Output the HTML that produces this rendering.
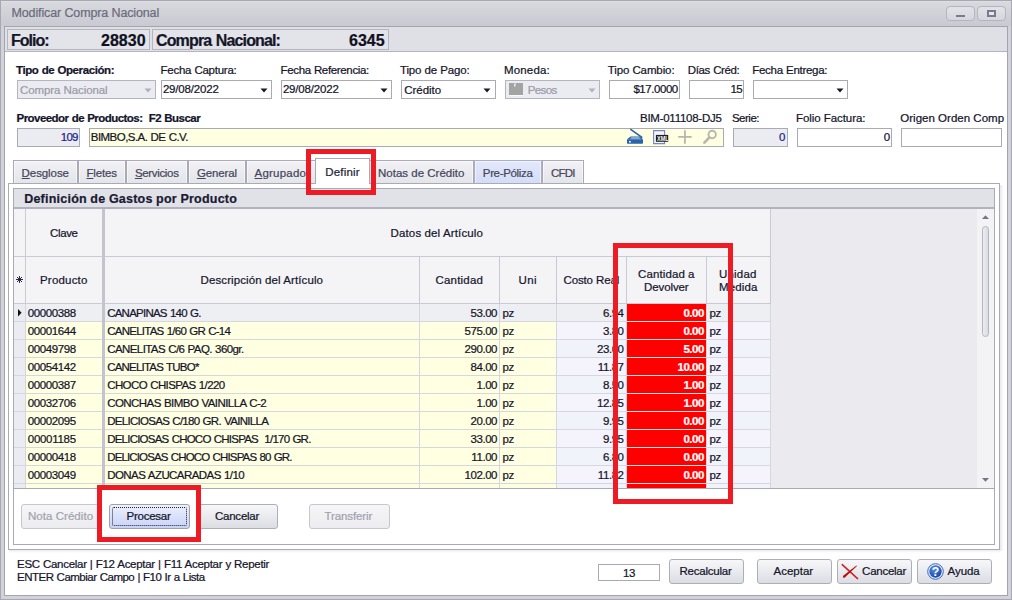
<!DOCTYPE html>
<html lang="es"><head><meta charset="utf-8"><title>Modificar Compra Nacional</title>
<style>
html,body{margin:0;padding:0;}
body{width:1012px;height:600px;overflow:hidden;position:relative;background:#d2d3da;font-family:"Liberation Sans", sans-serif;}
#w{position:absolute;left:0;top:0;width:1012px;height:600px;overflow:hidden;}
#w div,#w svg,#w .t{position:absolute;}
.t{white-space:nowrap;line-height:14px;height:14px;-webkit-text-stroke:0.22px currentColor;}
</style></head><body><div id="w">
<div style="left:0px;top:0px;width:1012px;height:600px;background:#d2d3da;box-shadow:inset 0 0 0 1px #a7a8b2;"></div>
<div style="left:1px;top:1px;width:1010px;height:25px;background:linear-gradient(#e4e5e9 0,#d8d9de 1px,#c9cad2 100%);"></div>
<div style="left:946px;top:6px;width:29px;height:15px;box-sizing:border-box;border:1px solid #b3b4bd;border-radius:4px;background:linear-gradient(#e2e3e8,#d6d7dd);"></div>
<div style="left:977px;top:6px;width:29px;height:15px;box-sizing:border-box;border:1px solid #b3b4bd;border-radius:4px;background:linear-gradient(#e2e3e8,#d6d7dd);"></div>
<div style="left:956px;top:15px;width:9px;height:2px;background:#7a7b88;"></div>
<div style="left:987px;top:10px;width:9px;height:7px;box-sizing:border-box;border:2px solid #7a7b88;background:#e8e9ee;"></div>
<div style="left:4px;top:26px;width:1004px;height:570px;box-sizing:border-box;border:1px solid #a3a4ae;background:#fff;"></div>
<div style="left:5px;top:27px;width:1002px;height:24px;background:#dfe0e5;"></div>
<div style="left:5px;top:51px;width:1002px;height:1px;background:#b4b5be;"></div>
<div style="left:7px;top:29px;width:143px;height:21px;box-sizing:border-box;border:1px solid #b4b5be;background:#e3e4e9;"></div>
<div style="left:152px;top:29px;width:237px;height:21px;box-sizing:border-box;border:1px solid #b4b5be;background:#e3e4e9;"></div>
<div style="left:17px;top:80px;width:139px;height:19px;box-sizing:border-box;border:1px solid #b4b5be;background:#ebecf1;"></div>
<svg style="left:143.5px;top:87.6px" width="8" height="5" viewBox="0 0 8 5"><path d="M0.5 0.5h7l-3.5 4z" fill="#b0b1bb"/></svg>
<div style="left:161px;top:80px;width:111px;height:19px;box-sizing:border-box;border:1px solid #a9aab5;background:#fff;"></div>
<svg style="left:259.5px;top:87.6px" width="8" height="5" viewBox="0 0 8 5"><path d="M0.5 0.5h7l-3.5 4z" fill="#1a1a2a"/></svg>
<div style="left:281px;top:80px;width:111px;height:19px;box-sizing:border-box;border:1px solid #a9aab5;background:#fff;"></div>
<svg style="left:379.5px;top:87.6px" width="8" height="5" viewBox="0 0 8 5"><path d="M0.5 0.5h7l-3.5 4z" fill="#1a1a2a"/></svg>
<div style="left:401px;top:80px;width:95px;height:19px;box-sizing:border-box;border:1px solid #a9aab5;background:#fff;"></div>
<svg style="left:483px;top:87.6px" width="8" height="5" viewBox="0 0 8 5"><path d="M0.5 0.5h7l-3.5 4z" fill="#1a1a2a"/></svg>
<div style="left:505px;top:80px;width:95px;height:19px;box-sizing:border-box;border:1px solid #b4b5be;background:#ebecf1;"></div>
<svg style="left:587.5px;top:87.6px" width="8" height="5" viewBox="0 0 8 5"><path d="M0.5 0.5h7l-3.5 4z" fill="#b0b1bb"/></svg>
<div style="left:509px;top:83px;width:14px;height:12px;background:#a3a3a3;"></div>
<div style="left:509px;top:95px;width:14px;height:1px;background:#fafafc;"></div>
<svg style="left:513px;top:83px" width="4" height="4" viewBox="0 0 4 4"><path d="M1.4 0.6 H3 L2.2 3.6 H1 Z" fill="#f4f4f6"/></svg>
<div style="left:609px;top:80px;width:71px;height:19px;box-sizing:border-box;border:1px solid #a9aab5;background:#fff;"></div>
<div style="left:689px;top:80px;width:55px;height:19px;box-sizing:border-box;border:1px solid #a9aab5;background:#fff;"></div>
<div style="left:753px;top:80px;width:95px;height:19px;box-sizing:border-box;border:1px solid #a9aab5;background:#fff;"></div>
<svg style="left:835.5px;top:87.6px" width="8" height="5" viewBox="0 0 8 5"><path d="M0.5 0.5h7l-3.5 4z" fill="#1a1a2a"/></svg>
<div style="left:17px;top:128px;width:63px;height:19px;box-sizing:border-box;border:1px solid #a9aab5;background:#ebecf1;"></div>
<div style="left:89px;top:128px;width:635px;height:19px;box-sizing:border-box;border:1px solid #a9aab5;background:#ffffe1;"></div>
<div style="left:733px;top:128px;width:55px;height:19px;box-sizing:border-box;border:1px solid #a9aab5;background:#ebecf1;"></div>
<div style="left:797px;top:128px;width:95px;height:19px;box-sizing:border-box;border:1px solid #a9aab5;background:#fff;"></div>
<div style="left:901px;top:128px;width:101px;height:19px;box-sizing:border-box;border:1px solid #a9aab5;background:#fff;"></div>
<svg style="left:626px;top:128px" width="18" height="17" viewBox="0 0 18 17"><path d="M4.3 1.2 L16.3 9.6" stroke="#2a62ad" stroke-width="1.6" fill="none"/><path d="M1 11.2 L4.6 8.4 H13.8 L17 11.2 Z" fill="#2a62ad"/><path d="M4.2 10.6 L5.4 9.4 H13.2 L14.6 10.6 Z" fill="#dbe8f7"/><path d="M1 11.2 H17 V15 Q17 15.8 16.2 15.8 H1.8 Q1 15.8 1 15 Z" fill="#2a62ad"/><rect x="3" y="13" width="1.8" height="1.5" fill="#fff"/></svg>
<svg style="left:653px;top:130px" width="16" height="15" viewBox="0 0 16 15"><path d="M0.6 0.6 H11.6 V13.6 H0.6 Z" fill="#f4f6fc" stroke="#7385c4" stroke-width="1.1"/><rect x="2.9" y="4.9" width="12.3" height="6.9" fill="#1d1d22"/></svg>
<div style="left:656px;top:134.6px;width:12.3px;height:7px;overflow:hidden;"><span style="position:absolute;left:0.9px;top:0.4px;font-size:7.6px;line-height:7px;font-weight:700;color:#fff;transform:scaleX(0.72);transform-origin:0 0;letter-spacing:0.1px;">XML</span></div>
<svg style="left:678px;top:130px" width="14" height="14" viewBox="0 0 14 14"><path d="M6.9 0.3V13.8M0.2 6.8H13.7" stroke="#b6b6b0" stroke-width="1.8"/></svg>
<svg style="left:702px;top:129px" width="16" height="16" viewBox="0 0 16 16"><circle cx="10.2" cy="5.5" r="3.7" fill="none" stroke="#b7b7ae" stroke-width="1.9"/><path d="M7.3 8.5 L2.4 13.7" stroke="#b7b7ae" stroke-width="2.6" stroke-linecap="round"/></svg>
<div style="left:8px;top:183px;width:992px;height:367px;box-sizing:border-box;border:1px solid #a9aab5;background:#fff;"></div>
<div style="left:13px;top:160px;width:65px;height:24px;box-sizing:border-box;border:1px solid #a9aab5;border-bottom:none;background:linear-gradient(#f2f2f5,#e3e4e9);box-shadow:inset 1px 1px 0 rgba(255,255,255,.55),inset -1px 0 0 rgba(255,255,255,.55);"></div>
<div style="left:78px;top:160px;width:48px;height:24px;box-sizing:border-box;border:1px solid #a9aab5;border-bottom:none;background:linear-gradient(#f2f2f5,#e3e4e9);box-shadow:inset 1px 1px 0 rgba(255,255,255,.55),inset -1px 0 0 rgba(255,255,255,.55);"></div>
<div style="left:126px;top:160px;width:62px;height:24px;box-sizing:border-box;border:1px solid #a9aab5;border-bottom:none;background:linear-gradient(#f2f2f5,#e3e4e9);box-shadow:inset 1px 1px 0 rgba(255,255,255,.55),inset -1px 0 0 rgba(255,255,255,.55);"></div>
<div style="left:188px;top:160px;width:58px;height:24px;box-sizing:border-box;border:1px solid #a9aab5;border-bottom:none;background:linear-gradient(#f2f2f5,#e3e4e9);box-shadow:inset 1px 1px 0 rgba(255,255,255,.55),inset -1px 0 0 rgba(255,255,255,.55);"></div>
<div style="left:246px;top:160px;width:71px;height:24px;box-sizing:border-box;border:1px solid #a9aab5;border-bottom:none;background:linear-gradient(#f2f2f5,#e3e4e9);box-shadow:inset 1px 1px 0 rgba(255,255,255,.55),inset -1px 0 0 rgba(255,255,255,.55);"></div>
<div style="left:368px;top:160px;width:106px;height:24px;box-sizing:border-box;border:1px solid #a9aab5;border-bottom:none;background:linear-gradient(#f2f2f5,#e3e4e9);box-shadow:inset 1px 1px 0 rgba(255,255,255,.55),inset -1px 0 0 rgba(255,255,255,.55);"></div>
<div style="left:474px;top:160px;width:68px;height:24px;box-sizing:border-box;border:1px solid #a9b0cf;border-bottom:none;background:linear-gradient(#e3e9fb,#d3dcf7);box-shadow:inset 1px 1px 0 rgba(255,255,255,.55),inset -1px 0 0 rgba(255,255,255,.55);"></div>
<div style="left:542px;top:160px;width:42px;height:24px;box-sizing:border-box;border:1px solid #a9aab5;border-bottom:none;background:linear-gradient(#f2f2f5,#e3e4e9);box-shadow:inset 1px 1px 0 rgba(255,255,255,.55),inset -1px 0 0 rgba(255,255,255,.55);"></div>
<div style="left:8px;top:183px;width:992px;height:1px;background:#a9aab5;"></div>
<div style="left:315px;top:158px;width:55px;height:26px;box-sizing:border-box;border:1px solid #a9aab5;border-bottom:none;background:#fff;"></div>
<div style="left:1000px;top:185px;width:4px;height:366px;background:linear-gradient(90deg,#e9e9ed,#fff);"></div>
<div style="left:9px;top:550px;width:991px;height:3px;background:linear-gradient(#ececf0,#fff);"></div>
<div style="left:13px;top:188px;width:982px;height:357px;box-sizing:border-box;border:1px solid #a9aab5;background:#fff;"></div>
<div style="left:14px;top:189px;width:980px;height:18px;background:#e1e2e7;"></div>
<div style="left:14px;top:207px;width:980px;height:2px;background:#b1b2bc;"></div>
<div style="left:14px;top:209px;width:757px;height:95px;background:#f4f4f7;"></div>
<div style="left:771px;top:209px;width:206px;height:279px;background:#ebebef;"></div>
<div style="left:977px;top:209px;width:17px;height:279px;background:#f3f3f6;"></div>
<div style="left:982px;top:226px;width:7px;height:111px;box-sizing:border-box;border:1px solid #b4b5bf;border-radius:4px;background:linear-gradient(90deg,#ecedf1,#dadbe1);"></div>
<svg style="left:982px;top:215px" width="7" height="4" viewBox="0 0 7 4"><path d="M0 4 L3.5 0.2 L7 4z" fill="#747584"/></svg>
<svg style="left:982px;top:478px" width="7" height="4" viewBox="0 0 7 4"><path d="M0 0 L3.5 3.8 L7 0z" fill="#747584"/></svg>
<div style="left:14px;top:256px;width:757px;height:1px;background:#c9cad3;"></div>
<div style="left:14px;top:303px;width:757px;height:1px;background:#c9cad3;"></div>
<div style="left:770px;top:209px;width:1px;height:95px;background:#c9cad3;"></div>
<div style="left:25px;top:209px;width:1px;height:95px;background:#c9cad3;"></div>
<div style="left:102px;top:209px;width:3px;height:95px;background:#c3c4ce;"></div>
<div style="left:419px;top:257px;width:1px;height:47px;background:#c9cad3;"></div>
<div style="left:499px;top:257px;width:1px;height:47px;background:#c9cad3;"></div>
<div style="left:556px;top:257px;width:1px;height:47px;background:#c9cad3;"></div>
<div style="left:626px;top:257px;width:1px;height:47px;background:#c9cad3;"></div>
<div style="left:706px;top:257px;width:1px;height:47px;background:#c9cad3;"></div>
<svg style="left:16px;top:276px" width="7" height="7" viewBox="0 0 7 7"><path d="M3.5 0V7M0 3.5H7M1 1L6 6M6 1L1 6" stroke="#15152a" stroke-width="0.9" fill="none"/></svg>
<div style="left:14px;top:304px;width:11px;height:17px;background:#ebecf1;"></div>
<div style="left:26px;top:304px;width:76px;height:17px;background:#eeeff3;"></div>
<div style="left:105px;top:304px;width:314px;height:17px;background:#eeeff3;"></div>
<div style="left:420px;top:304px;width:79px;height:17px;background:#eeeff3;"></div>
<div style="left:500px;top:304px;width:56px;height:17px;background:#eeeff3;"></div>
<div style="left:557px;top:304px;width:69px;height:17px;background:#eeeff3;"></div>
<div style="left:627px;top:304px;width:79px;height:17px;background:#ff0000;"></div>
<div style="left:707px;top:304px;width:63px;height:17px;background:#eeeff3;"></div>
<div style="left:14px;top:321px;width:757px;height:1px;background:#d6d7de;"></div>
<div style="left:627px;top:321px;width:79px;height:1px;background:#fbe6e6;"></div>
<div style="left:14px;top:322px;width:11px;height:17px;background:#ebecf1;"></div>
<div style="left:26px;top:322px;width:76px;height:17px;background:#ffffe1;"></div>
<div style="left:105px;top:322px;width:314px;height:17px;background:#ffffe1;"></div>
<div style="left:420px;top:322px;width:79px;height:17px;background:#ffffe1;"></div>
<div style="left:500px;top:322px;width:56px;height:17px;background:#ffffe1;"></div>
<div style="left:557px;top:322px;width:69px;height:17px;background:#f5f3fc;"></div>
<div style="left:627px;top:322px;width:79px;height:17px;background:#ff0000;"></div>
<div style="left:707px;top:322px;width:63px;height:17px;background:#f5f3fc;"></div>
<div style="left:14px;top:339px;width:757px;height:1px;background:#d6d7de;"></div>
<div style="left:627px;top:339px;width:79px;height:1px;background:#fbe6e6;"></div>
<div style="left:14px;top:340px;width:11px;height:17px;background:#ebecf1;"></div>
<div style="left:26px;top:340px;width:76px;height:17px;background:#ffffe1;"></div>
<div style="left:105px;top:340px;width:314px;height:17px;background:#ffffe1;"></div>
<div style="left:420px;top:340px;width:79px;height:17px;background:#ffffe1;"></div>
<div style="left:500px;top:340px;width:56px;height:17px;background:#ffffe1;"></div>
<div style="left:557px;top:340px;width:69px;height:17px;background:#f0f3f9;"></div>
<div style="left:627px;top:340px;width:79px;height:17px;background:#ff0000;"></div>
<div style="left:707px;top:340px;width:63px;height:17px;background:#f0f3f9;"></div>
<div style="left:14px;top:357px;width:757px;height:1px;background:#d6d7de;"></div>
<div style="left:627px;top:357px;width:79px;height:1px;background:#fbe6e6;"></div>
<div style="left:14px;top:358px;width:11px;height:17px;background:#ebecf1;"></div>
<div style="left:26px;top:358px;width:76px;height:17px;background:#ffffe1;"></div>
<div style="left:105px;top:358px;width:314px;height:17px;background:#ffffe1;"></div>
<div style="left:420px;top:358px;width:79px;height:17px;background:#ffffe1;"></div>
<div style="left:500px;top:358px;width:56px;height:17px;background:#ffffe1;"></div>
<div style="left:557px;top:358px;width:69px;height:17px;background:#f5f3fc;"></div>
<div style="left:627px;top:358px;width:79px;height:17px;background:#ff0000;"></div>
<div style="left:707px;top:358px;width:63px;height:17px;background:#f5f3fc;"></div>
<div style="left:14px;top:375px;width:757px;height:1px;background:#d6d7de;"></div>
<div style="left:627px;top:375px;width:79px;height:1px;background:#fbe6e6;"></div>
<div style="left:14px;top:376px;width:11px;height:17px;background:#ebecf1;"></div>
<div style="left:26px;top:376px;width:76px;height:17px;background:#ffffe1;"></div>
<div style="left:105px;top:376px;width:314px;height:17px;background:#ffffe1;"></div>
<div style="left:420px;top:376px;width:79px;height:17px;background:#ffffe1;"></div>
<div style="left:500px;top:376px;width:56px;height:17px;background:#ffffe1;"></div>
<div style="left:557px;top:376px;width:69px;height:17px;background:#f0f3f9;"></div>
<div style="left:627px;top:376px;width:79px;height:17px;background:#ff0000;"></div>
<div style="left:707px;top:376px;width:63px;height:17px;background:#f0f3f9;"></div>
<div style="left:14px;top:393px;width:757px;height:1px;background:#d6d7de;"></div>
<div style="left:627px;top:393px;width:79px;height:1px;background:#fbe6e6;"></div>
<div style="left:14px;top:394px;width:11px;height:17px;background:#ebecf1;"></div>
<div style="left:26px;top:394px;width:76px;height:17px;background:#ffffe1;"></div>
<div style="left:105px;top:394px;width:314px;height:17px;background:#ffffe1;"></div>
<div style="left:420px;top:394px;width:79px;height:17px;background:#ffffe1;"></div>
<div style="left:500px;top:394px;width:56px;height:17px;background:#ffffe1;"></div>
<div style="left:557px;top:394px;width:69px;height:17px;background:#f5f3fc;"></div>
<div style="left:627px;top:394px;width:79px;height:17px;background:#ff0000;"></div>
<div style="left:707px;top:394px;width:63px;height:17px;background:#f5f3fc;"></div>
<div style="left:14px;top:411px;width:757px;height:1px;background:#d6d7de;"></div>
<div style="left:627px;top:411px;width:79px;height:1px;background:#fbe6e6;"></div>
<div style="left:14px;top:412px;width:11px;height:17px;background:#ebecf1;"></div>
<div style="left:26px;top:412px;width:76px;height:17px;background:#ffffe1;"></div>
<div style="left:105px;top:412px;width:314px;height:17px;background:#ffffe1;"></div>
<div style="left:420px;top:412px;width:79px;height:17px;background:#ffffe1;"></div>
<div style="left:500px;top:412px;width:56px;height:17px;background:#ffffe1;"></div>
<div style="left:557px;top:412px;width:69px;height:17px;background:#f0f3f9;"></div>
<div style="left:627px;top:412px;width:79px;height:17px;background:#ff0000;"></div>
<div style="left:707px;top:412px;width:63px;height:17px;background:#f0f3f9;"></div>
<div style="left:14px;top:429px;width:757px;height:1px;background:#d6d7de;"></div>
<div style="left:627px;top:429px;width:79px;height:1px;background:#fbe6e6;"></div>
<div style="left:14px;top:430px;width:11px;height:17px;background:#ebecf1;"></div>
<div style="left:26px;top:430px;width:76px;height:17px;background:#ffffe1;"></div>
<div style="left:105px;top:430px;width:314px;height:17px;background:#ffffe1;"></div>
<div style="left:420px;top:430px;width:79px;height:17px;background:#ffffe1;"></div>
<div style="left:500px;top:430px;width:56px;height:17px;background:#ffffe1;"></div>
<div style="left:557px;top:430px;width:69px;height:17px;background:#f5f3fc;"></div>
<div style="left:627px;top:430px;width:79px;height:17px;background:#ff0000;"></div>
<div style="left:707px;top:430px;width:63px;height:17px;background:#f5f3fc;"></div>
<div style="left:14px;top:447px;width:757px;height:1px;background:#d6d7de;"></div>
<div style="left:627px;top:447px;width:79px;height:1px;background:#fbe6e6;"></div>
<div style="left:14px;top:448px;width:11px;height:17px;background:#ebecf1;"></div>
<div style="left:26px;top:448px;width:76px;height:17px;background:#ffffe1;"></div>
<div style="left:105px;top:448px;width:314px;height:17px;background:#ffffe1;"></div>
<div style="left:420px;top:448px;width:79px;height:17px;background:#ffffe1;"></div>
<div style="left:500px;top:448px;width:56px;height:17px;background:#ffffe1;"></div>
<div style="left:557px;top:448px;width:69px;height:17px;background:#f0f3f9;"></div>
<div style="left:627px;top:448px;width:79px;height:17px;background:#ff0000;"></div>
<div style="left:707px;top:448px;width:63px;height:17px;background:#f0f3f9;"></div>
<div style="left:14px;top:465px;width:757px;height:1px;background:#d6d7de;"></div>
<div style="left:627px;top:465px;width:79px;height:1px;background:#fbe6e6;"></div>
<div style="left:14px;top:466px;width:11px;height:17px;background:#ebecf1;"></div>
<div style="left:26px;top:466px;width:76px;height:17px;background:#ffffe1;"></div>
<div style="left:105px;top:466px;width:314px;height:17px;background:#ffffe1;"></div>
<div style="left:420px;top:466px;width:79px;height:17px;background:#ffffe1;"></div>
<div style="left:500px;top:466px;width:56px;height:17px;background:#ffffe1;"></div>
<div style="left:557px;top:466px;width:69px;height:17px;background:#f5f3fc;"></div>
<div style="left:627px;top:466px;width:79px;height:17px;background:#ff0000;"></div>
<div style="left:707px;top:466px;width:63px;height:17px;background:#f5f3fc;"></div>
<div style="left:14px;top:483px;width:757px;height:1px;background:#d6d7de;"></div>
<div style="left:627px;top:483px;width:79px;height:1px;background:#fbe6e6;"></div>
<div style="left:14px;top:484px;width:11px;height:4px;background:#ebecf1;"></div>
<div style="left:26px;top:484px;width:76px;height:4px;background:#ffffe1;"></div>
<div style="left:105px;top:484px;width:314px;height:4px;background:#ffffe1;"></div>
<div style="left:420px;top:484px;width:79px;height:4px;background:#ffffe1;"></div>
<div style="left:500px;top:484px;width:56px;height:4px;background:#ffffe1;"></div>
<div style="left:557px;top:484px;width:69px;height:4px;background:#f0f3f9;"></div>
<div style="left:627px;top:484px;width:79px;height:4px;background:#ff0000;"></div>
<div style="left:707px;top:484px;width:63px;height:4px;background:#f0f3f9;"></div>
<div style="left:25px;top:304px;width:1px;height:184px;background:#d6d7de;"></div>
<div style="left:419px;top:304px;width:1px;height:184px;background:#d6d7de;"></div>
<div style="left:499px;top:304px;width:1px;height:184px;background:#d6d7de;"></div>
<div style="left:556px;top:304px;width:1px;height:184px;background:#d6d7de;"></div>
<div style="left:626px;top:304px;width:1px;height:184px;background:#d6d7de;"></div>
<div style="left:706px;top:304px;width:1px;height:184px;background:#d6d7de;"></div>
<div style="left:770px;top:304px;width:1px;height:184px;background:#d6d7de;"></div>
<div style="left:102px;top:304px;width:3px;height:184px;background:#c3c4ce;"></div>
<div style="left:14px;top:488px;width:980px;height:1px;background:#a9aab5;"></div>
<svg style="left:18px;top:309px" width="4" height="8" viewBox="0 0 4 8"><path d="M0 0 L3.6 3.7 L0 7.4z" fill="#111"/></svg>
<div style="left:21px;top:504px;width:81px;height:25px;box-sizing:border-box;border-radius:3px;border:1px solid #c6c7cf;background:linear-gradient(#f6f6f8,#ececf0);"></div>
<div style="left:109px;top:504px;width:81px;height:25px;box-sizing:border-box;border-radius:3px;border:1px solid #9fa0ac;background:linear-gradient(#eef1fd,#dbe2fa 45%,#c8d3f6);"></div>
<div style="left:112px;top:507px;width:75px;height:19px;box-sizing:border-box;border:1px dotted #222;border-radius:2px;"></div>
<div style="left:197px;top:504px;width:81px;height:25px;box-sizing:border-box;border-radius:3px;border:1px solid #adaeb8;background:linear-gradient(#f7f7f9,#ebecf0 45%,#dcdde3);"></div>
<div style="left:309px;top:504px;width:81px;height:25px;box-sizing:border-box;border-radius:3px;border:1px solid #c6c7cf;background:linear-gradient(#f6f6f8,#ececf0);"></div>
<div style="left:598px;top:564px;width:62px;height:17px;box-sizing:border-box;border:1px solid #a9aab5;background:#fff;"></div>
<div style="left:669px;top:559px;width:75px;height:25px;box-sizing:border-box;border-radius:3px;border:1px solid #adaeb8;background:linear-gradient(#f7f7f9,#ebecf0 45%,#dcdde3);"></div>
<div style="left:757px;top:559px;width:75px;height:25px;box-sizing:border-box;border-radius:3px;border:1px solid #adaeb8;background:linear-gradient(#f7f7f9,#ebecf0 45%,#dcdde3);"></div>
<div style="left:837px;top:559px;width:75px;height:25px;box-sizing:border-box;border-radius:3px;border:1px solid #adaeb8;background:linear-gradient(#f7f7f9,#ebecf0 45%,#dcdde3);"></div>
<div style="left:917px;top:559px;width:75px;height:25px;box-sizing:border-box;border-radius:3px;border:1px solid #adaeb8;background:linear-gradient(#f7f7f9,#ebecf0 45%,#dcdde3);"></div>
<svg style="left:841px;top:563px" width="18" height="17" viewBox="0 0 18 17"><path d="M1.2 1.6 L16.6 15.6" stroke="#d21f1f" stroke-width="1.5" stroke-linecap="round"/><path d="M15.4 2.4 L16 3 L3.6 14.8 L1.8 14.6 L2.2 12.8 Z" fill="#b80f0f"/></svg>
<svg style="left:927px;top:563px" width="17" height="17" viewBox="0 0 17 17"><defs><radialGradient id="hg" cx="0.4" cy="0.3" r="0.8"><stop offset="0" stop-color="#5a8fe6"/><stop offset="1" stop-color="#103c9f"/></radialGradient></defs><circle cx="8.5" cy="8.5" r="7.8" fill="#eef3fc" stroke="#3a63b8" stroke-width="1"/><circle cx="8.5" cy="8.5" r="6.2" fill="url(#hg)"/><text x="8.5" y="12.6" font-family="Liberation Sans, sans-serif" font-size="12.3" font-weight="700" fill="#fff" text-anchor="middle">?</text></svg>
<span class="t" style="left:11.50px;top:6.37px;font-size:12.5px;letter-spacing:-0.138px;color:#6b6b7c;word-spacing:0.138px;">Modificar Compra Nacional</span>
<span class="t" style="left:16.00px;top:63.40px;font-size:11.5px;letter-spacing:-0.405px;color:#14142a;font-weight:700;word-spacing:0.405px;">Tipo de Operación:</span>
<span class="t" style="left:160.50px;top:63.40px;font-size:11.5px;letter-spacing:-0.251px;color:#14142a;word-spacing:0.251px;">Fecha Captura:</span>
<span class="t" style="left:280.50px;top:63.40px;font-size:11.5px;letter-spacing:-0.348px;color:#14142a;word-spacing:0.348px;">Fecha Referencia:</span>
<span class="t" style="left:400.00px;top:63.40px;font-size:11.5px;letter-spacing:-0.153px;color:#14142a;word-spacing:0.153px;">Tipo de Pago:</span>
<span class="t" style="left:504.10px;top:63.40px;font-size:11.5px;letter-spacing:0.133px;color:#14142a;">Moneda:</span>
<span class="t" style="left:607.70px;top:63.40px;font-size:11.5px;letter-spacing:-0.106px;color:#14142a;word-spacing:0.106px;">Tipo Cambio:</span>
<span class="t" style="left:687.80px;top:63.40px;font-size:11.5px;letter-spacing:-0.374px;color:#14142a;word-spacing:0.374px;">Días Créd:</span>
<span class="t" style="left:752.20px;top:63.40px;font-size:11.5px;letter-spacing:-0.272px;color:#14142a;word-spacing:0.272px;">Fecha Entrega:</span>
<span class="t" style="left:20.00px;top:83.20px;font-size:11.5px;letter-spacing:-0.090px;color:#9a9aa6;word-spacing:0.090px;">Compra Nacional</span>
<span class="t" style="left:162.90px;top:82.20px;font-size:11.5px;letter-spacing:-0.176px;color:#14142a;">29/08/2022</span>
<span class="t" style="left:282.90px;top:82.20px;font-size:11.5px;letter-spacing:-0.176px;color:#14142a;">29/08/2022</span>
<span class="t" style="left:404.30px;top:83.40px;font-size:11.5px;letter-spacing:-0.040px;color:#14142a;">Crédito</span>
<span class="t" style="left:527.80px;top:83.40px;font-size:11.5px;letter-spacing:-0.654px;color:#9a9aa6;">Pesos</span>
<span class="t" style="left:633.40px;top:82.20px;font-size:11.5px;letter-spacing:-0.446px;color:#14142a;">$17.0000</span>
<span class="t" style="left:730.50px;top:82.20px;font-size:11.5px;letter-spacing:-0.648px;color:#14142a;">15</span>
<span class="t" style="left:16.50px;top:111.00px;font-size:11.5px;letter-spacing:-0.545px;color:#14142a;font-weight:700;word-spacing:0.545px;white-space:pre;">Proveedor de Productos:  F2 Buscar</span>
<span class="t" style="left:640.00px;top:111.00px;font-size:11.5px;letter-spacing:-0.260px;color:#14142a;">BIM-011108-DJ5</span>
<span class="t" style="left:731.90px;top:111.00px;font-size:11.5px;letter-spacing:-0.474px;color:#14142a;">Serie:</span>
<span class="t" style="left:796.00px;top:111.00px;font-size:11.5px;letter-spacing:-0.070px;color:#14142a;word-spacing:0.070px;">Folio Factura:</span>
<span class="t" style="left:900.30px;top:111.00px;font-size:11.5px;letter-spacing:0.017px;color:#14142a;word-spacing:-0.017px;">Origen Orden Comp</span>
<span class="t" style="left:60.80px;top:130.40px;font-size:11.5px;letter-spacing:-0.796px;color:#1c1c8c;">109</span>
<span class="t" style="left:90.80px;top:130.40px;font-size:11.5px;letter-spacing:-0.542px;color:#14142a;word-spacing:0.542px;">BIMBO,S.A. DE C.V.</span>
<span class="t" style="left:779.10px;top:130.40px;font-size:11.5px;letter-spacing:0.194px;color:#1c1c8c;">0</span>
<span class="t" style="left:883.80px;top:130.40px;font-size:11.5px;letter-spacing:-0.106px;color:#14142a;">0</span>
<span class="t" style="left:11.00px;top:34.11px;font-size:16px;letter-spacing:-0.991px;color:#16162a;font-weight:700;">Folio:</span>
<span class="t" style="left:101.00px;top:34.11px;font-size:16px;letter-spacing:0.020px;color:#101020;font-weight:700;">28830</span>
<span class="t" style="left:156.00px;top:34.11px;font-size:16px;letter-spacing:-0.855px;color:#16162a;font-weight:700;word-spacing:0.855px;">Compra Nacional:</span>
<span class="t" style="left:349.00px;top:34.11px;font-size:16px;letter-spacing:0.002px;color:#101020;font-weight:700;">6345</span>
<span class="t" style="left:21.60px;top:165.90px;font-size:11.5px;letter-spacing:-0.082px;color:#45455a;"><u>D</u>esglose</span>
<span class="t" style="left:86.50px;top:165.90px;font-size:11.5px;letter-spacing:-0.188px;color:#45455a;"><u>F</u>letes</span>
<span class="t" style="left:134.90px;top:165.90px;font-size:11.5px;letter-spacing:-0.328px;color:#45455a;"><u>S</u>ervicios</span>
<span class="t" style="left:196.90px;top:165.90px;font-size:11.5px;letter-spacing:-0.146px;color:#45455a;"><u>G</u>eneral</span>
<span class="t" style="left:254.50px;top:165.90px;font-size:11.5px;letter-spacing:0.216px;color:#45455a;"><u>A</u>grupado</span>
<span class="t" style="left:325.20px;top:164.90px;font-size:11.5px;letter-spacing:0.209px;color:#1e1e38;">Definir</span>
<span class="t" style="left:378.00px;top:165.90px;font-size:11.5px;letter-spacing:0.007px;color:#45455a;word-spacing:-0.007px;">Notas de Crédito</span>
<span class="t" style="left:482.80px;top:165.90px;font-size:11.5px;letter-spacing:-0.336px;color:#45455a;">Pre-Póliza</span>
<span class="t" style="left:551.10px;top:165.90px;font-size:11.5px;letter-spacing:-0.811px;color:#45455a;">CFDI</span>
<span class="t" style="left:24.20px;top:191.67px;font-size:12.5px;letter-spacing:0.228px;color:#1a1a34;font-weight:700;word-spacing:-0.228px;">Definición de Gastos por Producto</span>
<span class="t" style="left:50.00px;top:226.40px;font-size:11.5px;letter-spacing:-0.361px;color:#16162c;">Clave</span>
<span class="t" style="left:390.50px;top:226.40px;font-size:11.5px;letter-spacing:0.154px;color:#16162c;word-spacing:-0.154px;">Datos del Artículo</span>
<span class="t" style="left:40.00px;top:273.40px;font-size:11.5px;letter-spacing:0.196px;color:#16162c;">Producto</span>
<span class="t" style="left:200.50px;top:273.40px;font-size:11.5px;letter-spacing:0.110px;color:#16162c;word-spacing:-0.110px;">Descripción del Artículo</span>
<span class="t" style="left:435.50px;top:273.40px;font-size:11.5px;letter-spacing:0.194px;color:#16162c;">Cantidad</span>
<span class="t" style="left:518.50px;top:273.40px;font-size:11.5px;letter-spacing:0.445px;color:#16162c;">Uni</span>
<span class="t" style="left:563.50px;top:273.40px;font-size:11.5px;letter-spacing:-0.143px;color:#16162c;word-spacing:0.143px;">Costo Real</span>
<span class="t" style="left:638.00px;top:267.20px;font-size:11.5px;letter-spacing:0.108px;color:#16162c;word-spacing:-0.108px;">Cantidad a</span>
<span class="t" style="left:644.00px;top:280.20px;font-size:11.5px;letter-spacing:-0.099px;color:#16162c;">Devolver</span>
<span class="t" style="left:719.00px;top:267.20px;font-size:11.5px;letter-spacing:0.191px;color:#16162c;">Unidad</span>
<span class="t" style="left:719.00px;top:280.20px;font-size:11.5px;letter-spacing:0.147px;color:#16162c;">Medida</span>
<span class="t" style="left:27.80px;top:305.50px;font-size:11.5px;letter-spacing:-0.396px;color:#14142a;">00000388</span>
<span class="t" style="left:107.20px;top:305.50px;font-size:11.5px;letter-spacing:-0.771px;color:#14142a;word-spacing:0.771px;white-space:pre;">CANAPINAS 140 G.</span>
<span class="t" style="left:470.52px;top:305.50px;font-size:11.5px;letter-spacing:-0.450px;color:#14142a;">53.00</span>
<span class="t" style="left:502.50px;top:305.50px;font-size:11.5px;letter-spacing:-0.378px;color:#14142a;">pz</span>
<span class="t" style="left:602.96px;top:305.50px;font-size:11.5px;letter-spacing:-0.450px;color:#14142a;">6.94</span>
<span class="t" style="left:683.41px;top:305.50px;font-size:11.5px;letter-spacing:-0.500px;color:#ffffff;font-weight:700;">0.00</span>
<span class="t" style="left:709.50px;top:305.50px;font-size:11.5px;letter-spacing:-0.378px;color:#14142a;">pz</span>
<span class="t" style="left:27.80px;top:323.50px;font-size:11.5px;letter-spacing:-0.396px;color:#14142a;">00001644</span>
<span class="t" style="left:107.20px;top:323.50px;font-size:11.5px;letter-spacing:-0.753px;color:#14142a;word-spacing:0.753px;white-space:pre;">CANELITAS 1/60 GR C-14</span>
<span class="t" style="left:464.56px;top:323.50px;font-size:11.5px;letter-spacing:-0.450px;color:#14142a;">575.00</span>
<span class="t" style="left:502.50px;top:323.50px;font-size:11.5px;letter-spacing:-0.378px;color:#14142a;">pz</span>
<span class="t" style="left:602.96px;top:323.50px;font-size:11.5px;letter-spacing:-0.450px;color:#14142a;">3.80</span>
<span class="t" style="left:683.41px;top:323.50px;font-size:11.5px;letter-spacing:-0.500px;color:#ffffff;font-weight:700;">0.00</span>
<span class="t" style="left:709.50px;top:323.50px;font-size:11.5px;letter-spacing:-0.378px;color:#14142a;">pz</span>
<span class="t" style="left:27.80px;top:341.50px;font-size:11.5px;letter-spacing:-0.396px;color:#14142a;">00049798</span>
<span class="t" style="left:107.20px;top:341.50px;font-size:11.5px;letter-spacing:-0.579px;color:#14142a;word-spacing:0.579px;white-space:pre;">CANELITAS C/6 PAQ. 360gr.</span>
<span class="t" style="left:464.56px;top:341.50px;font-size:11.5px;letter-spacing:-0.450px;color:#14142a;">290.00</span>
<span class="t" style="left:502.50px;top:341.50px;font-size:11.5px;letter-spacing:-0.378px;color:#14142a;">pz</span>
<span class="t" style="left:597.02px;top:341.50px;font-size:11.5px;letter-spacing:-0.450px;color:#14142a;">23.60</span>
<span class="t" style="left:683.41px;top:341.50px;font-size:11.5px;letter-spacing:-0.500px;color:#ffffff;font-weight:700;">5.00</span>
<span class="t" style="left:709.50px;top:341.50px;font-size:11.5px;letter-spacing:-0.378px;color:#14142a;">pz</span>
<span class="t" style="left:27.80px;top:359.50px;font-size:11.5px;letter-spacing:-0.396px;color:#14142a;">00054142</span>
<span class="t" style="left:107.20px;top:359.50px;font-size:11.5px;letter-spacing:-0.791px;color:#14142a;word-spacing:0.791px;white-space:pre;">CANELITAS TUBO*</span>
<span class="t" style="left:470.52px;top:359.50px;font-size:11.5px;letter-spacing:-0.450px;color:#14142a;">84.00</span>
<span class="t" style="left:502.50px;top:359.50px;font-size:11.5px;letter-spacing:-0.378px;color:#14142a;">pz</span>
<span class="t" style="left:597.86px;top:359.50px;font-size:11.5px;letter-spacing:-0.450px;color:#14142a;">11.87</span>
<span class="t" style="left:677.52px;top:359.50px;font-size:11.5px;letter-spacing:-0.500px;color:#ffffff;font-weight:700;">10.00</span>
<span class="t" style="left:709.50px;top:359.50px;font-size:11.5px;letter-spacing:-0.378px;color:#14142a;">pz</span>
<span class="t" style="left:27.80px;top:377.50px;font-size:11.5px;letter-spacing:-0.396px;color:#14142a;">00000387</span>
<span class="t" style="left:107.20px;top:377.50px;font-size:11.5px;letter-spacing:-0.601px;color:#14142a;word-spacing:0.601px;white-space:pre;">CHOCO CHISPAS 1/220</span>
<span class="t" style="left:476.46px;top:377.50px;font-size:11.5px;letter-spacing:-0.450px;color:#14142a;">1.00</span>
<span class="t" style="left:502.50px;top:377.50px;font-size:11.5px;letter-spacing:-0.378px;color:#14142a;">pz</span>
<span class="t" style="left:602.96px;top:377.50px;font-size:11.5px;letter-spacing:-0.450px;color:#14142a;">8.50</span>
<span class="t" style="left:683.41px;top:377.50px;font-size:11.5px;letter-spacing:-0.500px;color:#ffffff;font-weight:700;">1.00</span>
<span class="t" style="left:709.50px;top:377.50px;font-size:11.5px;letter-spacing:-0.378px;color:#14142a;">pz</span>
<span class="t" style="left:27.80px;top:395.50px;font-size:11.5px;letter-spacing:-0.396px;color:#14142a;">00032706</span>
<span class="t" style="left:107.20px;top:395.50px;font-size:11.5px;letter-spacing:-0.557px;color:#14142a;word-spacing:0.557px;white-space:pre;">CONCHAS BIMBO VAINILLA C-2</span>
<span class="t" style="left:476.46px;top:395.50px;font-size:11.5px;letter-spacing:-0.450px;color:#14142a;">1.00</span>
<span class="t" style="left:502.50px;top:395.50px;font-size:11.5px;letter-spacing:-0.378px;color:#14142a;">pz</span>
<span class="t" style="left:597.02px;top:395.50px;font-size:11.5px;letter-spacing:-0.450px;color:#14142a;">12.85</span>
<span class="t" style="left:683.41px;top:395.50px;font-size:11.5px;letter-spacing:-0.500px;color:#ffffff;font-weight:700;">1.00</span>
<span class="t" style="left:709.50px;top:395.50px;font-size:11.5px;letter-spacing:-0.378px;color:#14142a;">pz</span>
<span class="t" style="left:27.80px;top:413.50px;font-size:11.5px;letter-spacing:-0.396px;color:#14142a;">00002095</span>
<span class="t" style="left:107.20px;top:413.50px;font-size:11.5px;letter-spacing:-0.711px;color:#14142a;word-spacing:0.711px;white-space:pre;">DELICIOSAS C/180 GR. VAINILLA</span>
<span class="t" style="left:470.52px;top:413.50px;font-size:11.5px;letter-spacing:-0.450px;color:#14142a;">20.00</span>
<span class="t" style="left:502.50px;top:413.50px;font-size:11.5px;letter-spacing:-0.378px;color:#14142a;">pz</span>
<span class="t" style="left:602.96px;top:413.50px;font-size:11.5px;letter-spacing:-0.450px;color:#14142a;">9.95</span>
<span class="t" style="left:683.41px;top:413.50px;font-size:11.5px;letter-spacing:-0.500px;color:#ffffff;font-weight:700;">0.00</span>
<span class="t" style="left:709.50px;top:413.50px;font-size:11.5px;letter-spacing:-0.378px;color:#14142a;">pz</span>
<span class="t" style="left:27.80px;top:431.50px;font-size:11.5px;letter-spacing:-0.289px;color:#14142a;">00001185</span>
<span class="t" style="left:107.20px;top:431.50px;font-size:11.5px;letter-spacing:-0.776px;color:#14142a;word-spacing:0.776px;white-space:pre;">DELICIOSAS CHOCO CHISPAS  1/170 GR.</span>
<span class="t" style="left:470.52px;top:431.50px;font-size:11.5px;letter-spacing:-0.450px;color:#14142a;">33.00</span>
<span class="t" style="left:502.50px;top:431.50px;font-size:11.5px;letter-spacing:-0.378px;color:#14142a;">pz</span>
<span class="t" style="left:602.96px;top:431.50px;font-size:11.5px;letter-spacing:-0.450px;color:#14142a;">9.95</span>
<span class="t" style="left:683.41px;top:431.50px;font-size:11.5px;letter-spacing:-0.500px;color:#ffffff;font-weight:700;">0.00</span>
<span class="t" style="left:709.50px;top:431.50px;font-size:11.5px;letter-spacing:-0.378px;color:#14142a;">pz</span>
<span class="t" style="left:27.80px;top:449.50px;font-size:11.5px;letter-spacing:-0.396px;color:#14142a;">00000418</span>
<span class="t" style="left:107.20px;top:449.50px;font-size:11.5px;letter-spacing:-0.855px;color:#14142a;word-spacing:0.855px;white-space:pre;">DELICIOSAS CHOCO CHISPAS 80 GR.</span>
<span class="t" style="left:471.36px;top:449.50px;font-size:11.5px;letter-spacing:-0.450px;color:#14142a;">11.00</span>
<span class="t" style="left:502.50px;top:449.50px;font-size:11.5px;letter-spacing:-0.378px;color:#14142a;">pz</span>
<span class="t" style="left:602.96px;top:449.50px;font-size:11.5px;letter-spacing:-0.450px;color:#14142a;">6.80</span>
<span class="t" style="left:683.41px;top:449.50px;font-size:11.5px;letter-spacing:-0.500px;color:#ffffff;font-weight:700;">0.00</span>
<span class="t" style="left:709.50px;top:449.50px;font-size:11.5px;letter-spacing:-0.378px;color:#14142a;">pz</span>
<span class="t" style="left:27.80px;top:467.50px;font-size:11.5px;letter-spacing:-0.396px;color:#14142a;">00003049</span>
<span class="t" style="left:107.20px;top:467.50px;font-size:11.5px;letter-spacing:-0.565px;color:#14142a;word-spacing:0.565px;white-space:pre;">DONAS AZUCARADAS 1/10</span>
<span class="t" style="left:464.56px;top:467.50px;font-size:11.5px;letter-spacing:-0.450px;color:#14142a;">102.00</span>
<span class="t" style="left:502.50px;top:467.50px;font-size:11.5px;letter-spacing:-0.378px;color:#14142a;">pz</span>
<span class="t" style="left:597.86px;top:467.50px;font-size:11.5px;letter-spacing:-0.450px;color:#14142a;">11.82</span>
<span class="t" style="left:683.41px;top:467.50px;font-size:11.5px;letter-spacing:-0.500px;color:#ffffff;font-weight:700;">0.00</span>
<span class="t" style="left:709.50px;top:467.50px;font-size:11.5px;letter-spacing:-0.378px;color:#14142a;">pz</span>
<span class="t" style="left:28.00px;top:508.80px;font-size:11.5px;letter-spacing:0.049px;color:#a2a2ae;word-spacing:-0.049px;">Nota Crédito</span>
<span class="t" style="left:126.50px;top:508.80px;font-size:11.5px;letter-spacing:-0.241px;color:#14142a;">Procesar</span>
<span class="t" style="left:215.00px;top:508.80px;font-size:11.5px;letter-spacing:-0.241px;color:#14142a;">Cancelar</span>
<span class="t" style="left:324.50px;top:508.80px;font-size:11.5px;letter-spacing:-0.118px;color:#a2a2ae;">Transferir</span>
<span class="t" style="left:17.00px;top:557.00px;font-size:11.5px;letter-spacing:-0.290px;color:#14142a;word-spacing:0.290px;">ESC Cancelar | F12 Aceptar | F11 Aceptar y Repetir</span>
<span class="t" style="left:17.00px;top:570.00px;font-size:11.5px;letter-spacing:-0.510px;color:#14142a;word-spacing:0.510px;">ENTER Cambiar Campo | F10 Ir a Lista</span>
<span class="t" style="left:623.00px;top:566.20px;font-size:11.5px;letter-spacing:-0.348px;color:#14142a;">13</span>
<span class="t" style="left:679.50px;top:563.70px;font-size:11.5px;letter-spacing:-0.223px;color:#14142a;">Recalcular</span>
<span class="t" style="left:773.50px;top:563.70px;font-size:11.5px;letter-spacing:-0.006px;color:#14142a;">Aceptar</span>
<span class="t" style="left:862.10px;top:563.70px;font-size:11.5px;letter-spacing:-0.254px;color:#14142a;">Cancelar</span>
<span class="t" style="left:947.50px;top:563.70px;font-size:11.5px;letter-spacing:-0.041px;color:#14142a;">Ayuda</span>
<div style="left:306px;top:149px;width:70px;height:46px;box-sizing:border-box;border:5px solid #ed1c24;"></div>
<div style="left:613px;top:243px;width:120px;height:261px;box-sizing:border-box;border:5px solid #ed1c24;"></div>
<div style="left:97px;top:485px;width:104px;height:57px;box-sizing:border-box;border:5px solid #ed1c24;"></div>
</div></body></html>
